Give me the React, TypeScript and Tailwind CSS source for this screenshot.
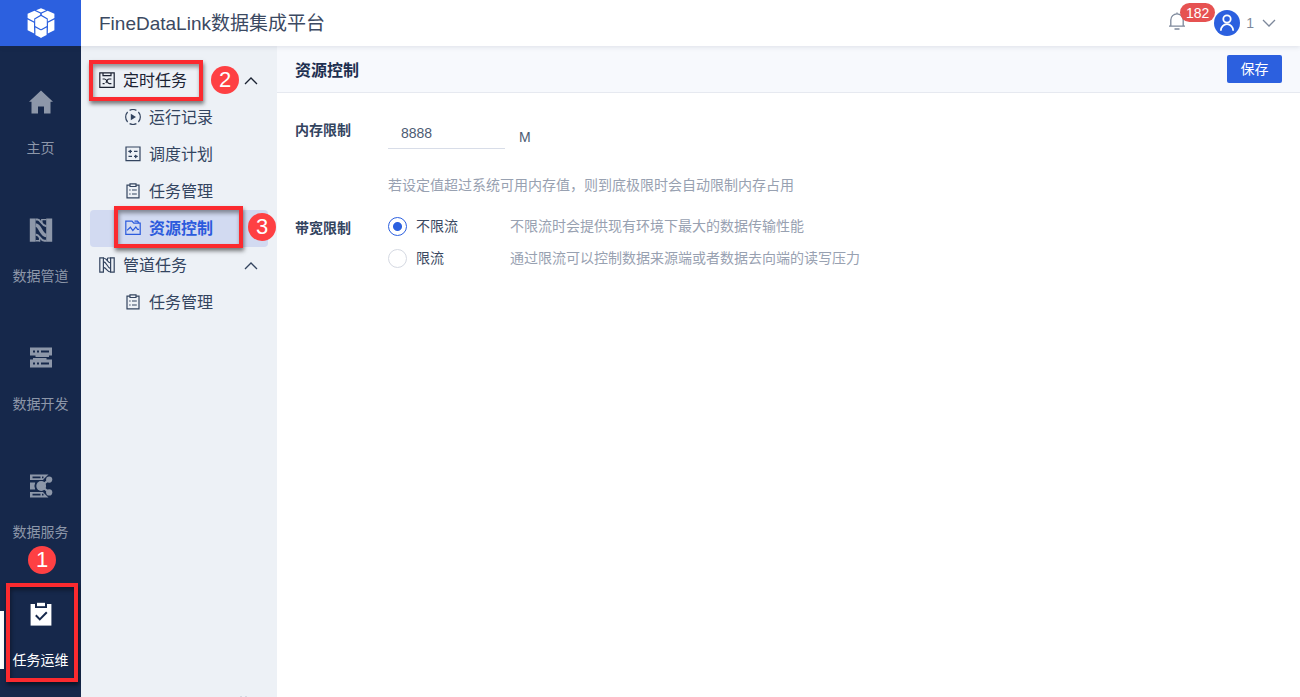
import type { ReactNode } from "react";

function Logo() {
  return (
    <svg viewBox="0 0 28 30" className="h-[30px] w-7" fill="#fff">
      <path d="M14 0.2 19 2.2 14 4.4 9 2.2Z" />
      <path d="M7.4 2.8 13.2 5.4V7L7.2 10.4V13.4L0.6 10V5.8Z" />
      <path d="M20.6 2.8 14.8 5.4V7L20.8 10.4V13.4L27.4 10V5.8Z" />
      <path d="M14 8 19.8 11.3V17.9L14 21.2 8.2 17.9V11.3Z" />
      <path d="M0.6 11.6 7 14.8V19L7.2 25.4 0.6 22.2Z" />
      <path d="M27.4 11.6 21 14.8V19L20.8 25.4 27.4 22.2Z" />
      <path d="M8.4 19.4 13.4 22.3V29.4L8.4 27Z" />
      <path d="M19.6 19.4 14.6 22.3V29.4L19.6 27Z" />
      <path d="M13 22.3H15V29.4L14 29.8 13 29.4Z" />
    </svg>
  );
}

function HomeIcon() {
  return (
    <svg viewBox="0 0 24 24" className="size-6" fill="currentColor">
      <path d="M12 0.5 24 11.8H21.5V23.5H15V16.5H9V23.5H2.5V11.8H0Z" />
    </svg>
  );
}

function PipeSolidIcon() {
  return (
    <svg viewBox="0 0 24 24" className="size-6" fill="none" stroke="currentColor">
      <path d="M0.8 0.5H6.6V23.8H0.8ZM17.2 0.5H23.2V23.8H17.2Z" fill="currentColor" stroke="none" />
      <path d="M6.6 1.6H8.5C12 1.6 11.5 7 17.4 8.2" strokeWidth="2" />
      <path d="M6.6 7C11.5 7.5 11.5 16.5 17.4 17.6" strokeWidth="3.6" />
      <path d="M6.6 16.4C11 17 11.5 22.6 15.5 22.8H17.4" strokeWidth="2" />
      <path d="M12.6 1.6H17.4M12.8 1V5.8M6.6 22.8H10.6M10.6 18.8V23.8" strokeWidth="1.4" />
    </svg>
  );
}

function ServerIcon() {
  return (
    <svg viewBox="0 0 24 24" className="size-6" fill="currentColor">
      <path
        fillRule="evenodd"
        d="M1 1.5H23V9.5H20V11H6.5V9.5H1ZM4 4.5V6.5H6V4.5ZM8 4.5V6.5H10V4.5ZM12 4.5V6.5H20V4.5ZM4 12H17.5V13.5H23V21.5H1V13.5H4ZM4 16.5V18.5H6V16.5ZM8 16.5V18.5H10V16.5ZM12 16.5V18.5H20V16.5Z"
      />
    </svg>
  );
}

function ShareIcon() {
  return (
    <svg viewBox="0 0 24 24" className="size-6" fill="currentColor">
      <path
        fillRule="evenodd"
        d="M1 0.5H19.5L16 3.8 14 6H1ZM3.5 2.5V4.2H11.5V2.5ZM13 2.5V4.2H14.5V2.5ZM1 8.6H6.2L5.4 12 6.2 15.4H1ZM1 18H14L16 20.2 19.5 23.5H1ZM3.5 19.8V21.5H11.5V19.8ZM13 19.8V21.5H14.5V19.8Z"
      />
      <circle cx="12.2" cy="12" r="4.9" />
      <circle cx="20.2" cy="5.6" r="3.1" />
      <circle cx="20.2" cy="18.4" r="3.1" />
      <path d="M12.2 12 20.2 5.6M12.2 12 20.2 18.4" stroke="currentColor" strokeWidth="2" />
    </svg>
  );
}

function OpsIcon() {
  return (
    <svg viewBox="0 0 24 24" className="size-6">
      <path d="M1.6 2H22.4V23.6H1.6Z" fill="#fff" />
      <path d="M6 1H18V6H6Z" fill="#16284b" />
      <path d="M8 0.8H16V4.2H8Z" fill="#fff" />
      <path d="M6.8 13.2 10.8 17.4 17.8 10.2" fill="none" stroke="#16284b" strokeWidth="2" />
    </svg>
  );
}

function LineIcon({ children }: { children: ReactNode }) {
  return (
    <svg
      viewBox="0 0 16 16"
      className="mb-0.5 size-4 shrink-0"
      fill="none"
      stroke="currentColor"
      strokeWidth="1.2"
    >
      {children}
    </svg>
  );
}

const timerIcon = (
  <LineIcon>
    <path d="M0.8 0.8H15.2V15.4H0.8ZM4 1V3.6H12V1" />
    <path d="M3.6 7H5.6C8.4 7 7.6 11.6 10.4 11.6H12.4M3.6 11.6H5.6M9.6 7H12.4M6.8 10.8C7.8 9.6 8 7.6 9.6 7" strokeWidth="1.1" />
  </LineIcon>
);

const runIcon = (
  <LineIcon>
    <path d="M4.6 1.4A7.4 7.4 0 0 1 11.4 1.4M4.6 14.6A7.4 7.4 0 0 0 11.4 14.6M2.6 3A7.4 7.4 0 0 0 2.6 13M13.4 3A7.4 7.4 0 0 1 13.4 13" />
    <path d="M5.8 4.8 11 8 5.8 11.2Z" fill="currentColor" stroke="none" />
  </LineIcon>
);

const planIcon = (
  <LineIcon>
    <path d="M1 1H15V14.6H1ZM3.5 5.4H7M9 5.4H12.5M3.5 10.4H7M9 10.4H12.5" />
    <path d="M3.2 5.4 6 3.4V7.4ZM12.8 10.4 10 8.4V12.4Z" fill="currentColor" stroke="none" />
  </LineIcon>
);

const listIcon = (
  <LineIcon>
    <path d="M5 2.2H2V14.8H14V2.2H11M5 0.9H11V3.5H5Z" />
    <path d="M4.2 7H5.6M7 7H11.8M4.2 11H5.6M7 11H11.8" />
  </LineIcon>
);

const folderIcon = (
  <LineIcon>
    <path d="M0.8 1.2H7L8.8 3.2H15.2V14.4H0.8ZM9.5 1.2H12.5L14 3" />
    <path d="M2 10.4 5.4 7.2 7.8 10.6 10.8 7 12.6 9.4H14" />
  </LineIcon>
);

const pipeIcon = (
  <LineIcon>
    <path d="M0.8 0.8H4.4V15.2H0.8ZM11.6 0.8H15.2V15.2H11.6Z" />
    <path d="M4.4 1C8 1 8 5.4 11.6 6M4.4 4.6C8 5 8 11 11.6 11.6M4.4 10.4C8 11 8 15 11.6 15M8.4 1V3.4M8.4 1H11.6" strokeWidth="1.1" />
  </LineIcon>
);

function Chevron({ up = false, className }: { up?: boolean; className: string }) {
  return (
    <svg viewBox="0 0 14 8" className={`h-2 w-3.5 ${className}`} fill="none" stroke="currentColor">
      <path d={up ? "M1 7 7 1 13 7" : "M1 1 7 7 13 1"} strokeWidth="1.3" />
    </svg>
  );
}

function Frame({ className }: { className: string }) {
  return (
    <span
      aria-hidden="true"
      className={`pointer-events-none absolute border-4 border-[#fb2a2f] shadow-[1px_3px_4px_rgba(0,0,0,0.5),inset_1px_3px_4px_rgba(0,0,0,0.4)] ${className}`}
    />
  );
}

function Step({ n, className }: { n: number; className: string }) {
  return (
    <span
      className={`absolute flex size-7 items-center justify-center rounded-full bg-[#fe4043] font-[Liberation_Sans] text-[22px] leading-7 text-white ${className}`}
    >
      {n}
    </span>
  );
}

const railItems = [
  { label: "主页", icon: <HomeIcon /> },
  { label: "数据管道", icon: <PipeSolidIcon /> },
  { label: "数据开发", icon: <ServerIcon /> },
  { label: "数据服务", icon: <ShareIcon /> },
];

function Rail() {
  return (
    <nav className="flex w-[81px] shrink-0 flex-col bg-[#16284b] text-sm text-[#8d97a9]">
      {railItems.map((item) => (
        <a key={item.label} href="#" className="flex h-32 flex-col items-center gap-6 pt-11 leading-5">
          {item.icon}
          <span>{item.label}</span>
        </a>
      ))}
      <a
        href="#"
        aria-current="page"
        className="relative flex h-32 flex-col items-center gap-6 pt-11 leading-5 text-white"
      >
        <span className="absolute top-[53px] left-0 h-[58px] w-1 bg-white" />
        <OpsIcon />
        <span>任务运维</span>
        <Frame className="top-[25px] left-[6px] h-[99px] w-[72px]" />
        <Step n={1} className="-top-3 left-7" />
      </a>
    </nav>
  );
}

function MenuChild({ icon, label }: { icon: ReactNode; label: string }) {
  return (
    <a href="#" className="flex h-[37px] items-center gap-2 pl-[35px]">
      {icon}
      {label}
    </a>
  );
}

function Sidebar() {
  return (
    <aside className="relative w-[196px] shrink-0 overflow-hidden bg-[#edf1f6] px-[9px] pt-4 text-base text-[#33445f]">
      <button
        type="button"
        className="relative flex h-[37px] w-full items-center gap-2 pr-[10px] pl-[9px] text-[#1b2232]"
      >
        {timerIcon}
        定时任务
        <Chevron up className="ml-auto" />
        <Frame className="-top-0.5 -left-px h-[41px] w-[114px]" />
        <Step n={2} className="top-1 left-[121px]" />
      </button>
      <MenuChild icon={runIcon} label="运行记录" />
      <MenuChild icon={planIcon} label="调度计划" />
      <MenuChild icon={listIcon} label="任务管理" />
      <a
        href="#"
        aria-current="page"
        className="relative flex h-[37px] items-center gap-2 rounded bg-[#d2daf1] pl-[35px] font-bold text-[#2c5bdd]"
      >
        {folderIcon}
        资源控制
        <Frame className="-top-1 left-6 h-[42px] w-[129px]" />
        <Step n={3} className="top-[3px] left-[158px] font-normal" />
      </a>
      <button type="button" className="flex h-[37px] w-full items-center gap-2 pr-[10px] pl-[9px]">
        {pipeIcon}
        管道任务
        <Chevron up className="ml-auto" />
      </button>
      <MenuChild icon={listIcon} label="任务管理" />
      <button type="button" aria-label="收起" className="absolute right-[30px] -bottom-[11px] text-[#8d97a9]">
        <svg viewBox="0 0 12 12" className="size-3" fill="none" stroke="currentColor">
          <path d="M6 0.5 1 6 6 11.5M11 0.5 6 6 11 11.5" />
        </svg>
      </button>
    </aside>
  );
}

function Header() {
  return (
    <header className="relative z-10 flex h-[46px] shrink-0 bg-white shadow-[0_1px_5px_rgba(30,40,70,0.12)]">
      <a href="#" aria-label="FineDataLink" className="flex w-[81px] items-center justify-center bg-[#2c60df]">
        <Logo />
      </a>
      <h1 className="flex items-center pt-0.5 pl-[18px] text-[19px] text-[#3b4962]">FineDataLink数据集成平台</h1>
      <div className="ml-auto flex items-center pr-6 text-[#7d889b]">
        <button type="button" aria-label="通知" className="relative mr-7 mb-1">
          <svg viewBox="0 0 18 18" className="size-[18px]" fill="none" stroke="currentColor" strokeWidth="1.3">
            <path d="M2.8 14V8A6.2 6.2 0 0 1 15.2 8V14M1 14.2H17M6.5 17H11.5M9 0.5V2" />
          </svg>
          <span className="absolute -top-[9px] left-3 flex h-[19px] w-[35px] items-center justify-center rounded-full bg-[#e65251] text-sm text-white">
            182
          </span>
        </button>
        <button type="button" className="flex items-center text-sm">
          <svg viewBox="0 0 26 26" className="mr-[6px] size-[26px]" fill="none" stroke="#fff" strokeWidth="1.8">
            <circle cx="13" cy="13" r="13" fill="#2c60df" stroke="none" />
            <circle cx="13" cy="9" r="3.7" />
            <path d="M6.8 20.8A6.2 6.6 0 0 1 19.2 20.8" />
          </svg>
          1
          <Chevron className="ml-2" />
        </button>
      </div>
    </header>
  );
}

const radioClass =
  "size-[19px] shrink-0 appearance-none rounded-full border border-[#d5d9e2] bg-white checked:border-[#2c60df] checked:bg-[radial-gradient(circle,#2c60df_4px,#fff_5px)]";

function LimitOption({ id, label, note, checked }: { id: string; label: string; note: string; checked?: boolean }) {
  return (
    <div className="flex items-center leading-5">
      <div className="flex w-[122px] shrink-0 items-center gap-[9px] text-[#3b4962]">
        <input id={id} type="radio" name="bandwidth" defaultChecked={checked} className={radioClass} />
        <label htmlFor={id}>{label}</label>
      </div>
      <p>{note}</p>
    </div>
  );
}

function Content() {
  return (
    <main className="flex-1 bg-white">
      <div className="flex h-[47px] items-center justify-between border-b border-[#e6e9f0] bg-[#f7f9fd] px-[18px]">
        <h2 className="pt-1 text-base font-bold text-[#1d2f50]">资源控制</h2>
        <button type="button" className="h-7 w-[55px] rounded-xs bg-[#2c60df] text-sm text-white">
          保存
        </button>
      </div>
      <form className="px-[18px] pt-5 text-sm text-[#98a1b1]">
        <div className="flex">
          <label htmlFor="memory" className="w-[93px] shrink-0 pt-px leading-8 font-bold text-[#33445f]">
            内存限制
          </label>
          <div>
            <div className="flex items-end text-[#4d5b73]">
              <input
                id="memory"
                type="text"
                defaultValue="8888"
                className="mr-[14px] h-9 w-[117px] border-b border-[#d8dde8] px-[13px] pt-1 outline-none"
              />
              <span className="leading-6">M</span>
            </div>
            <p className="mt-6 leading-6">若设定值超过系统可用内存值，则到底极限时会自动限制内存占用</p>
          </div>
        </div>
        <fieldset className="mt-[19px] flex">
          <legend className="float-left w-[93px] shrink-0 leading-6 font-bold text-[#33445f]">带宽限制</legend>
          <div className="flex flex-col gap-3">
            <LimitOption id="unlimited" label="不限流" note="不限流时会提供现有环境下最大的数据传输性能" checked />
            <LimitOption id="limited" label="限流" note="通过限流可以控制数据来源端或者数据去向端的读写压力" />
          </div>
        </fieldset>
      </form>
    </main>
  );
}

export default function App() {
  return (
    <div className="flex min-h-screen flex-col font-['Liberation_Sans','Noto_Sans_CJK_SC',sans-serif]">
      <Header />
      <div className="flex flex-1">
        <Rail />
        <Sidebar />
        <Content />
      </div>
    </div>
  );
}
